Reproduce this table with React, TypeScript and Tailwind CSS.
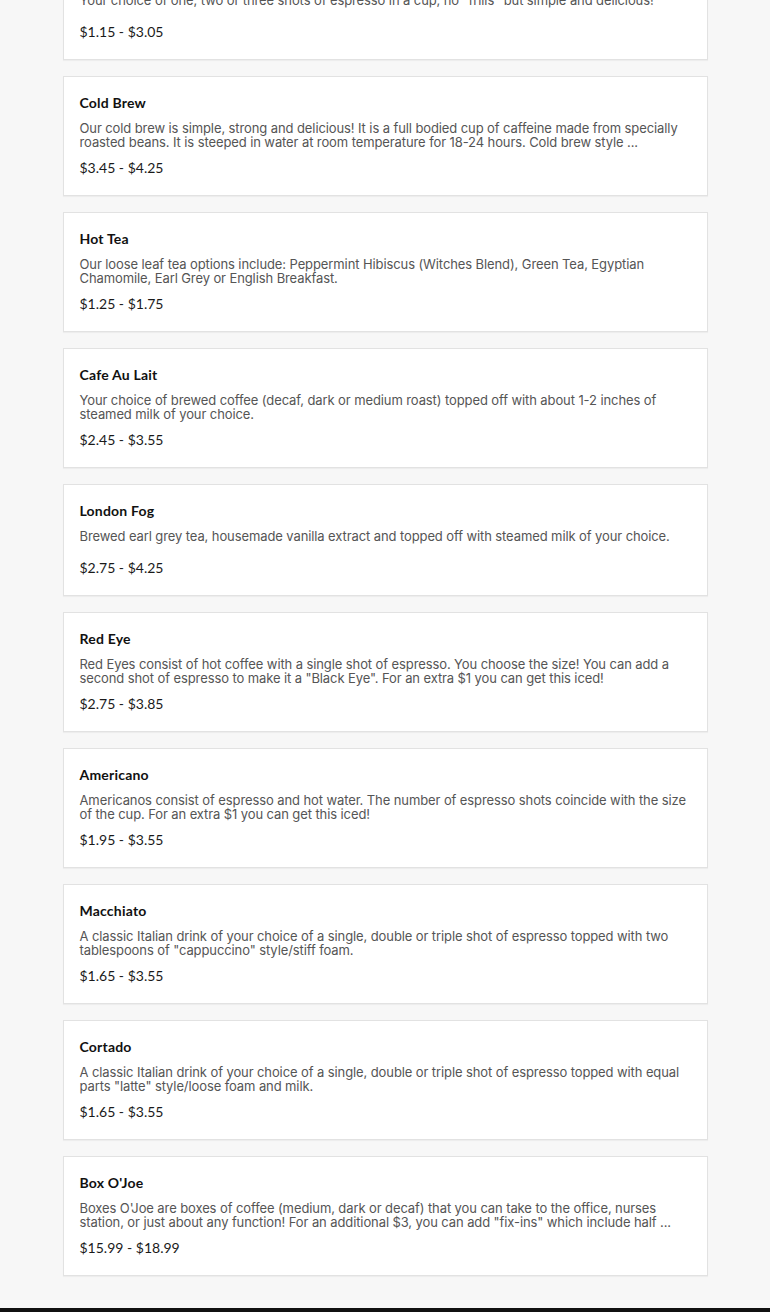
const items = [
  {
    name: 'Espresso',
    desc: 'Your choice of one, two or three shots of espresso in a cup, no "frills" but simple and delicious!',
    price: '$1.15 - $3.05',
  },
  {
    name: 'Cold Brew',
    desc: 'Our cold brew is simple, strong and delicious! It is a full bodied cup of caffeine made from specially roasted beans. It is steeped in water at room temperature for 18-24 hours. Cold brew style ...',
    price: '$3.45 - $4.25',
  },
  {
    name: 'Hot Tea',
    desc: 'Our loose leaf tea options include: Peppermint Hibiscus (Witches Blend), Green Tea, Egyptian Chamomile, Earl Grey or English Breakfast.',
    price: '$1.25 - $1.75',
  },
  {
    name: 'Cafe Au Lait',
    desc: 'Your choice of brewed coffee (decaf, dark or medium roast) topped off with about 1-2 inches of steamed milk of your choice.',
    price: '$2.45 - $3.55',
  },
  {
    name: 'London Fog',
    desc: 'Brewed earl grey tea, housemade vanilla extract and topped off with steamed milk of your choice.',
    price: '$2.75 - $4.25',
  },
  {
    name: 'Red Eye',
    desc: 'Red Eyes consist of hot coffee with a single shot of espresso. You choose the size! You can add a second shot of espresso to make it a "Black Eye". For an extra $1 you can get this iced!',
    price: '$2.75 - $3.85',
  },
  {
    name: 'Americano',
    desc: 'Americanos consist of espresso and hot water. The number of espresso shots coincide with the size of the cup. For an extra $1 you can get this iced!',
    price: '$1.95 - $3.55',
  },
  {
    name: 'Macchiato',
    desc: 'A classic Italian drink of your choice of a single, double or triple shot of espresso topped with two tablespoons of "cappuccino" style/stiff foam.',
    price: '$1.65 - $3.55',
  },
  {
    name: 'Cortado',
    desc: 'A classic Italian drink of your choice of a single, double or triple shot of espresso topped with equal parts "latte" style/loose foam and milk.',
    price: '$1.65 - $3.55',
  },
  {
    name: "Box O'Joe",
    desc: 'Boxes O\'Joe are boxes of coffee (medium, dark or decaf) that you can take to the office, nurses station, or just about any function! For an additional $3, you can add "fix-ins" which include half ...',
    price: '$15.99 - $18.99',
  },
];

export default function App() {
  return (
    <div className="min-h-screen bg-[#f7f7f7] font-['Lato','Noto_Sans',sans-serif]">
      <main className="mx-auto w-[645px] -mt-[52px] pb-8 flex flex-col gap-4">
        {items.map((item) => (
          <div
            key={item.name}
            className="bg-white border border-[#e2e2e2] shadow-[0_1px_1px_rgba(0,0,0,0.04)] px-4 pt-4 pb-[17px]"
          >
            <h3 className="text-[14px] leading-[20px] font-bold text-[#111] tracking-[0.2px]">
              {item.name}
            </h3>
            <p className="mt-2 min-h-[20px] font-['Inter',sans-serif] text-[13px] leading-[14px] tracking-[-0.1px] text-[#555]">
              {item.desc}
            </p>
            <p className="mt-[9px] text-[14px] leading-[20px] text-[#1a1a1a]">{item.price}</p>
          </div>
        ))}
      </main>
      <footer className="h-10 bg-[#111]" />
    </div>
  );
}
